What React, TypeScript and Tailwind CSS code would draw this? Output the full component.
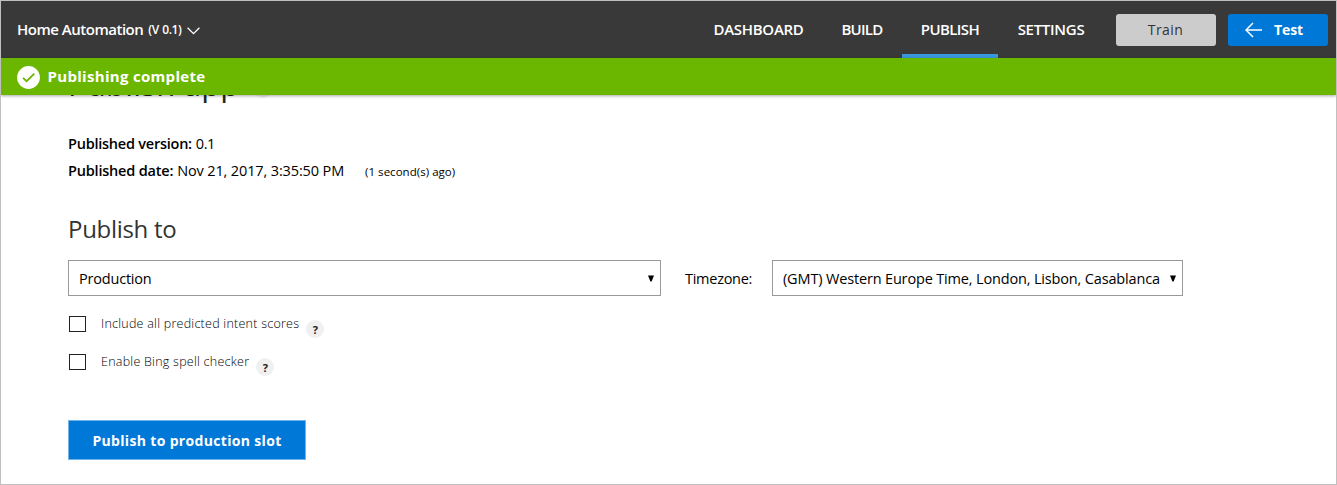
function CaretDown() {
  return (
    <svg className="h-[7px] w-[6px] shrink-0" viewBox="0 0 6 7" fill="#000">
      <path d="M0 0.5h6L3.6 6.5H2.4z" />
    </svg>
  );
}

function HelpBadge() {
  return (
    <span className="flex size-[18px] items-center justify-center rounded-full bg-[#f0f0f0] text-[11px] leading-none font-bold text-[#222]">
      ?
    </span>
  );
}

function Header() {
  return (
    <header className="flex h-[57px] shrink-0 items-center bg-[#393939] pr-2 pl-4 text-[15px] font-semibold text-white">
      <div className="flex items-center whitespace-nowrap">
        <span className="tracking-[-0.49px]">Home Automation</span>
        <span className="ml-[5px] text-[12px] tracking-[-0.45px] [word-spacing:1px]">(V 0.1)</span>
        <svg className="mt-[3px] ml-[6px] h-[8px] w-[13px]" viewBox="0 0 13 8" fill="none" stroke="#fff" strokeWidth="1.3">
          <path d="M0.6 0.8l5.9 5.9 5.9-5.9" />
        </svg>
      </div>
      <nav className="ml-auto flex h-full items-stretch">
        <a className="flex w-[128px] items-center justify-center pr-[1px] tracking-[-0.27px]">DASHBOARD</a>
        <a className="flex w-[79px] items-center justify-center pr-[1px] tracking-[-0.75px]">BUILD</a>
        <a className="flex w-[96px] items-center justify-center border-b-4 border-[#3a96dd] pt-1 tracking-[-0.6px]">PUBLISH</a>
        <a className="flex w-[106px] items-center justify-center tracking-[-0.29px]">SETTINGS</a>
      </nav>
      <button className="ml-[12px] flex h-8 w-[100px] items-center justify-center rounded-[3px] bg-[#ccc] pr-px text-[14px] font-medium tracking-[0.4px] text-[#333]">
        Train
      </button>
      <button className="ml-3 flex h-8 w-[100px] items-center rounded-[3px] bg-[#0078d7] pl-[17px] text-[14px] font-bold">
        <svg className="mt-px h-4 w-[17px]" viewBox="0 0 17 16" fill="none" stroke="#fff" strokeWidth="1.5">
          <path d="M8 1L1 8l7 7M1 8h16" />
        </svg>
        <span className="ml-3 tracking-[-0.1px]">Test</span>
      </button>
    </header>
  );
}

function Notice() {
  return (
    <div className="relative z-10 flex h-[37px] shrink-0 items-center bg-[#6bb700] pl-[15.5px] text-white shadow-[0_1px_3px_rgba(0,0,0,0.35)]">
      <svg className="mt-px size-[23px]" viewBox="0 0 23 23" fill="none">
        <circle cx="11.5" cy="11.5" r="11.4" fill="#fff" />
        <path d="M6 11.8l3.6 3.4L17.3 7.6" stroke="#6bb700" strokeWidth="1.8" />
      </svg>
      <span className="ml-2 text-[15px] font-bold tracking-[0.31px]">Publishing complete</span>
    </div>
  );
}

function Checkbox({ label }: { label: string }) {
  return (
    <div className="flex h-[38px]">
      <span className="mt-[6px] ml-px h-4 w-[17px] border border-[#222]" />
      <span className="ml-[15px] text-[12.5px] leading-[27px] font-[350] tracking-[0.25px] text-black">{label}</span>
      <span className="mt-[10px] ml-[7px]">
        <HelpBadge />
      </span>
    </div>
  );
}

export default function App() {
  return (
    <div className="flex h-[485px] w-[1337px] flex-col overflow-hidden border border-[#c0c0c0] bg-white font-['Open_Sans','Noto_Sans',sans-serif] text-[14.5px] text-black">
      <Header />
      <Notice />
      <main className="-mt-[33px] flex flex-col pl-[67px] whitespace-nowrap">
        <div className="flex h-[44px] items-center">
          <h1 className="text-[31px] tracking-[0.2px] text-[#222]">Publish app</h1>
          <span className="mt-[9px] ml-[15px]">
            <HelpBadge />
          </span>
        </div>
        <p className="mt-[24px] flex h-[27px] items-center">
          <span className="font-[550] tracking-[-0.24px]">Published version:</span>
          <span className="ml-[4px] tracking-[-0.5px]">0.1</span>
        </p>
        <p className="flex h-[27px] items-center">
          <span className="font-[550] tracking-[-0.2px]">Published date:</span>
          <span className="ml-[4px] tracking-[-0.13px]">Nov 21, 2017, 3:35:50 PM</span>
          <span className="mt-[2px] ml-[21px] text-[11.5px] tracking-[0.03px]">(1 second(s) ago)</span>
        </p>
        <h2 className="mt-[29px] text-[24px] leading-[32px] font-[380] tracking-[-0.3px] text-[#333]">Publish to</h2>
        <div className="mt-[15px] flex h-9 items-center">
          <div className="flex h-9 w-[593px] items-center justify-between border border-[#999] pr-[6px] pl-[10px]">
            <span className="pt-px tracking-[-0.2px]">Production</span>
            <CaretDown />
          </div>
          <span className="ml-[24px] w-[87px] pt-px tracking-[-0.27px]">Timezone:</span>
          <div className="flex h-9 w-[411px] items-center justify-between border border-[#999] pr-[6px] pl-[10px]">
            <span className="pt-px tracking-[-0.16px]">(GMT) Western Europe Time, London, Lisbon, Casablanca</span>
            <CaretDown />
          </div>
        </div>
        <div className="mt-[14px]">
          <Checkbox label="Include all predicted intent scores" />
          <Checkbox label="Enable Bing spell checker" />
        </div>
        <button className="mt-[34px] h-10 w-[238px] border border-[#71b5ec] bg-[#0078d7] text-[14px] font-bold tracking-[0.33px] text-white">
          Publish to production slot
        </button>
      </main>
    </div>
  );
}
